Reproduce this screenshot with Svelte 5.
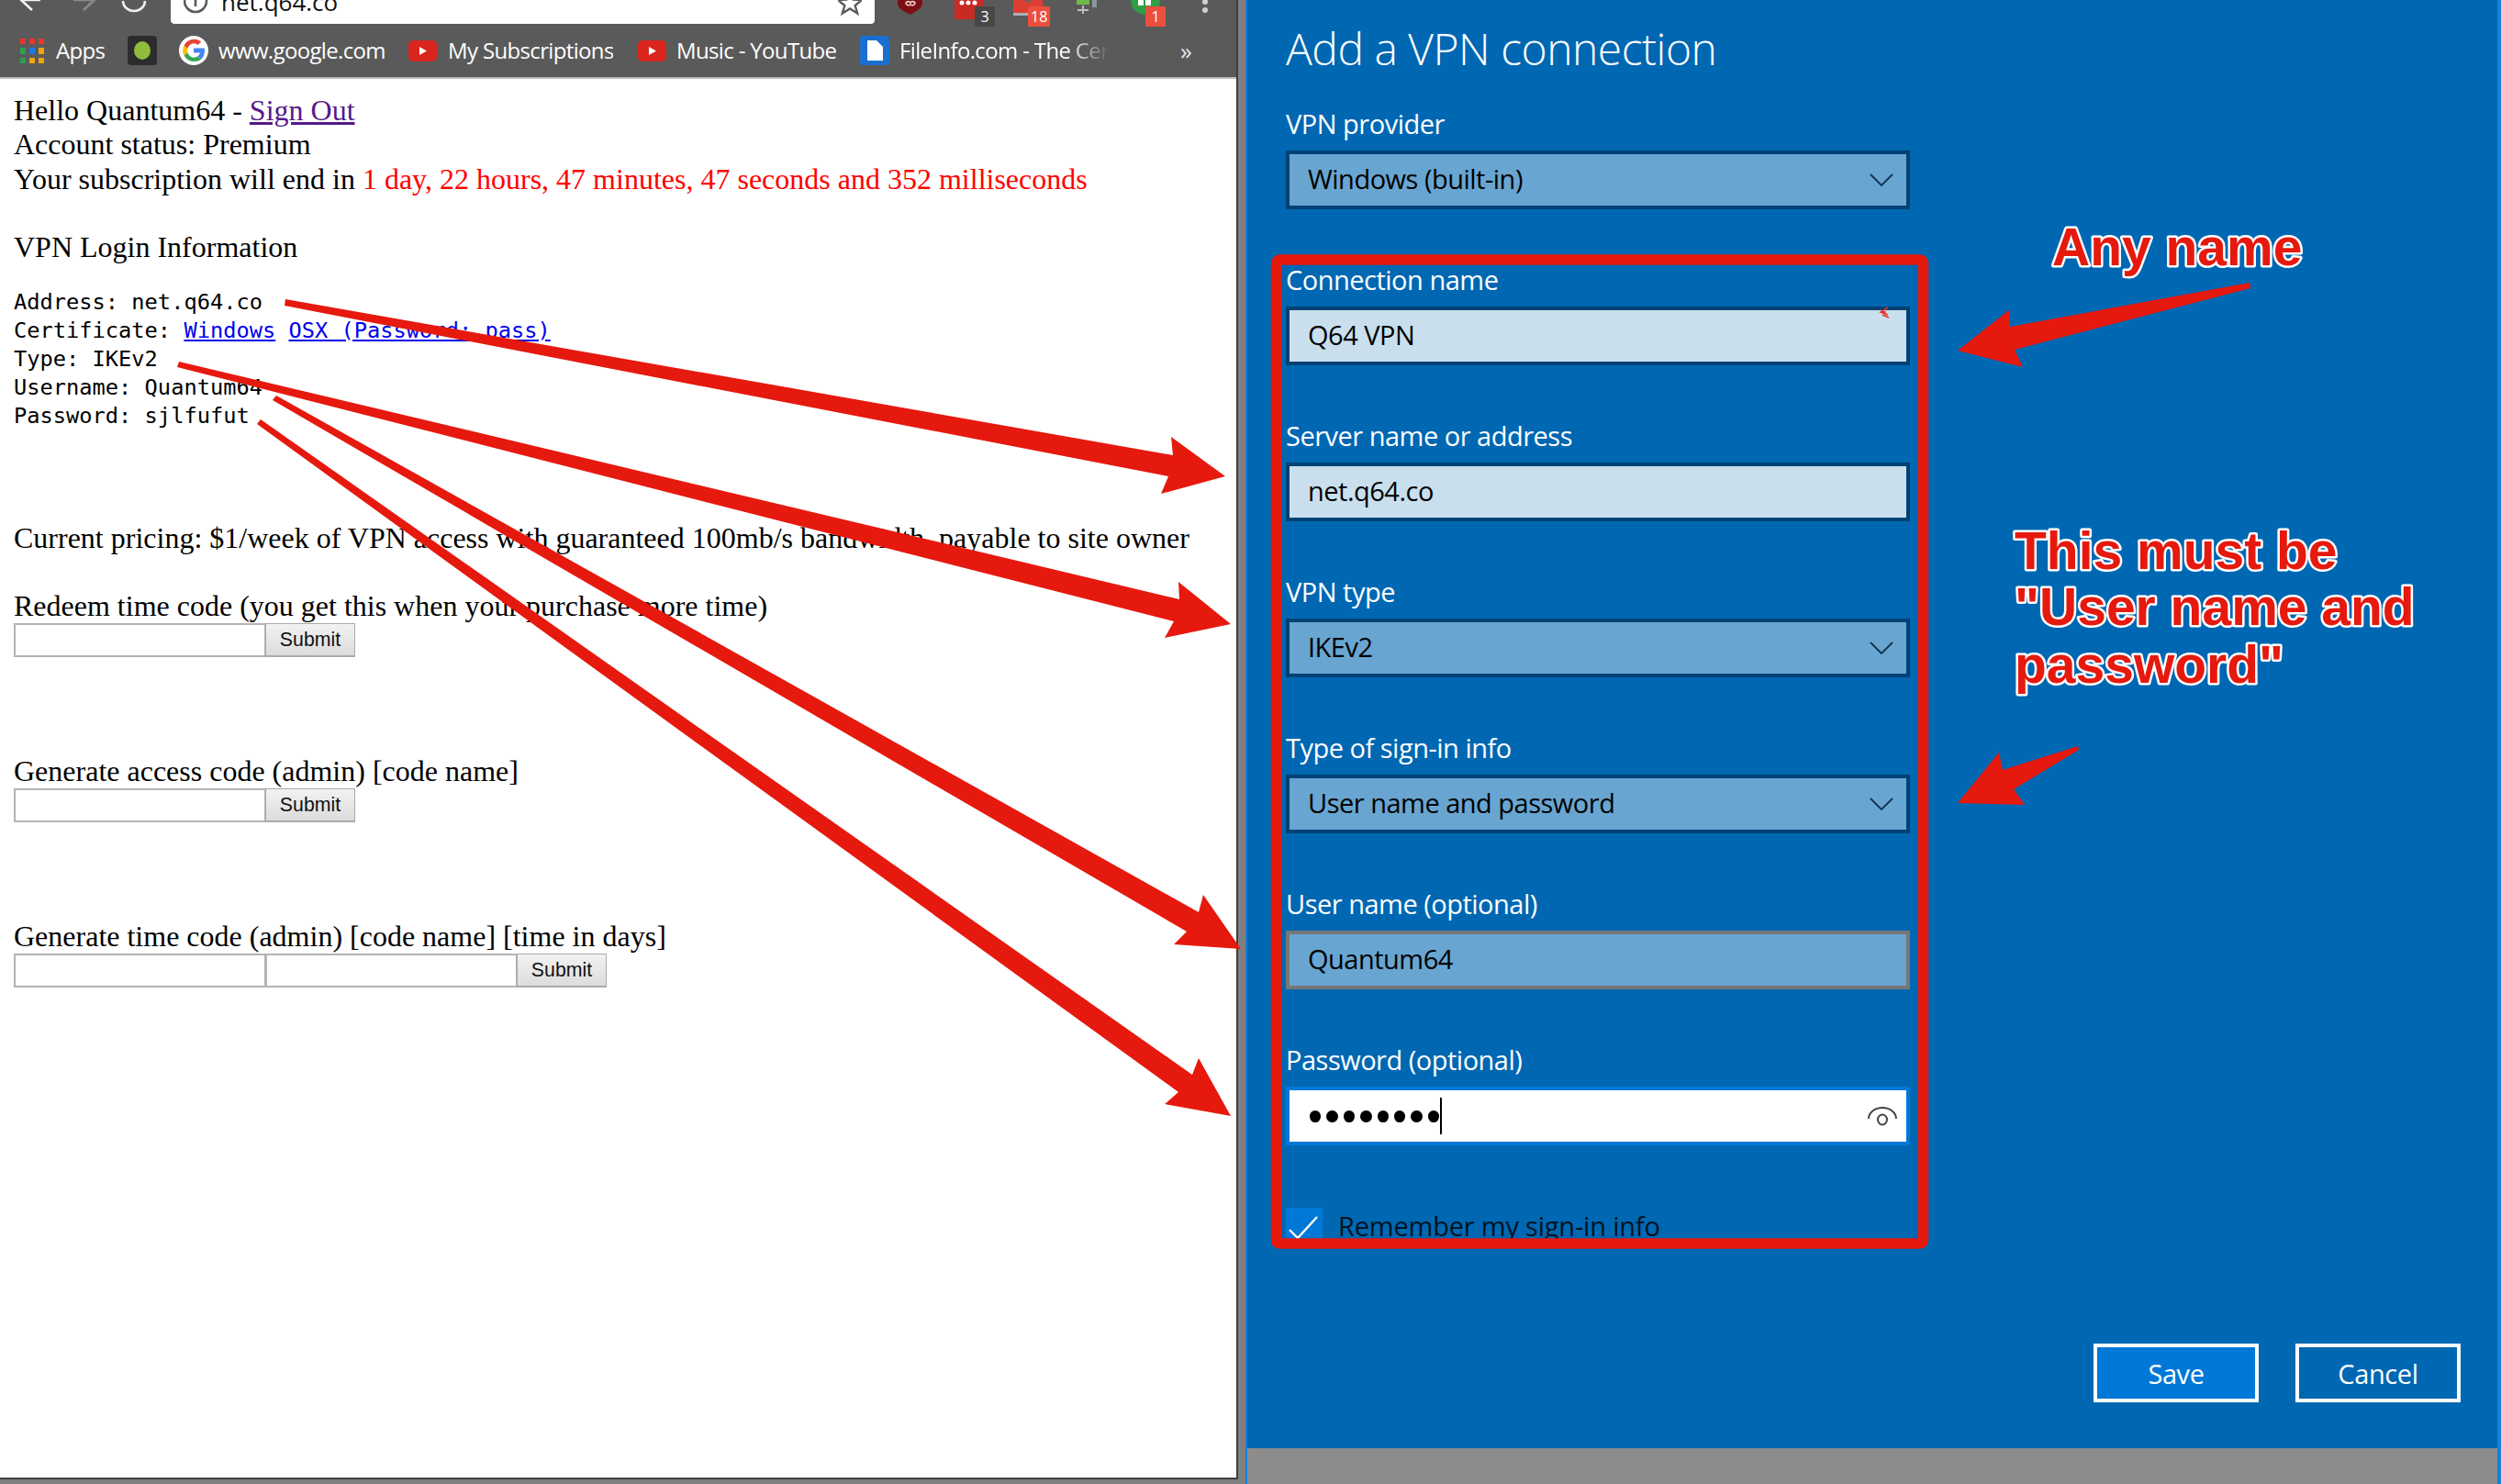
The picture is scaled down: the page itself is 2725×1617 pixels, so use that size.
<script>
  const bookmarks = [
    { icon: "apps", label: "Apps", width: 54, gap: 24, inner: 13 },
    { icon: "dot", label: "", width: 0, gap: 24, inner: 0 },
    { icon: "google", label: "www.google.com", width: 182, gap: 25, inner: 11 },
    { icon: "yt", label: "My Subscriptions", width: 180, gap: 27, inner: 12 },
    { icon: "yt", label: "Music - YouTube", width: 175, gap: 25, inner: 11 },
    { icon: "file", label: "FileInfo.com - The Cer", width: 229, gap: 0, inner: 11, fade: true },
  ];

  const fields = [
    { label: "VPN provider", value: "Windows (built-in)", kind: "select" },
    { label: "Connection name", value: "Q64 VPN", kind: "text" },
    { label: "Server name or address", value: "net.q64.co", kind: "text" },
    { label: "VPN type", value: "IKEv2", kind: "select" },
    { label: "Type of sign-in info", value: "User name and password", kind: "select" },
    { label: "User name (optional)", value: "Quantum64", kind: "hover" },
    { label: "Password (optional)", value: "", kind: "password" },
  ];

  const arrows = [
    "311,326 1278,496 1276,476 1335,519 1265,538 1273,519 310,333",
    "195,394 1285,653 1284,634 1341,680 1269,695 1279,677 193,400",
    "301,431 1306,994 1311,975 1352,1034 1279,1029 1293,1015 297,436",
    "284,457 1299,1171 1306,1153 1341,1216 1269,1203 1284,1190 280,462",
    "2451,308 2190,356 2190,337 2133,382 2204,400 2195,381 2452,314",
    "2264,813 2182,839 2178,820 2133,875 2206,877 2194,860 2265,817",
  ];
</script>

<div class="app">
  <div class="browser">
    <div class="toolbar">
      <svg class="nav" width="160" height="26" viewBox="0 0 160 26">
        <path d="M44 0H23M22 -1l13 12" fill="none" stroke="#f2f2f2" stroke-width="2.600" />
        <path d="M80 0h24M104 -1l-13 12" fill="none" stroke="#8a8a8a" stroke-width="2.600" />
        <path d="M158 1a12 11 0 1 1-24 0" fill="none" stroke="#eee" stroke-width="2.600" />
      </svg>
      <div class="urlbar">
        <svg width="28" height="26" viewBox="0 0 28 26">
          <circle cx="13" cy="1" r="12" fill="none" stroke="#5a5a5a" stroke-width="2.600" />
          <path d="M13 -2v9" stroke="#5a5a5a" stroke-width="2.600" />
        </svg>
        <span class="url">net.q64.co</span>
        <svg class="star" width="26" height="26" viewBox="0 0 26 26">
          <path d="M13 -10l3.600 9.500 9.400.5-7.300 6 2.500 8.500-8.200-5-8.200 5 2.500-8.500-7.300-6 9.400-.5z" fill="none" stroke="#5a5a5a" stroke-width="2.400" />
        </svg>
      </div>
      <div class="extensions">
        <svg width="28" height="16" viewBox="0 0 28 16"><path d="M0-6h27v10c0 5-8 9-13.500 12C8 13 0 9 0 4z" fill="#7b0f14" /><path d="M9 3a3 3 0 0 1 5 0 3 3 0 0 1 5 0 3 3 0 0 1-5 2 3 3 0 0 1-5-2" fill="none" stroke="#f3d0d0" stroke-width="1.600" /></svg>
        <div class="ext ext-meter">
          <svg width="32" height="21" viewBox="0 0 32 21"><rect y="-8" width="31" height="29" rx="2" fill="#c92a24" /><circle cx="8" cy="3" r="2.500" fill="#fff" /><circle cx="15" cy="3" r="2.500" fill="#fff" /><circle cx="22" cy="3" r="2.500" fill="#fff" /></svg>
          <span class="badge dark">3</span>
        </div>
        <div class="ext ext-mail">
          <svg width="32" height="18" viewBox="0 0 32 18"><rect y="-8" width="32" height="22" fill="#dc3f32" /><rect y="14" width="32" height="3" fill="#a9b0b5" /><path d="M10-2l6 6 6-6" fill="#666" /></svg>
          <span class="badge">18</span>
        </div>
        <svg class="ext-desk" width="26" height="16" viewBox="0 0 26 16"><rect x="2" y="-4" width="14" height="9" fill="#6dbb45" /><path d="M9 6v9M3 11h12" stroke="#b9c0c4" stroke-width="2" /><path d="M19-4h5v12h-5z" fill="#8d969b" /></svg>
        <div class="ext ext-hang">
          <svg width="32" height="17" viewBox="0 0 32 17"><circle cx="16" cy="0" r="16" fill="#2f9e44" /><rect x="8" y="-6" width="6" height="12" fill="#fff" /><rect x="16" y="-6" width="6" height="12" fill="#fff" /></svg>
          <span class="badge">1</span>
        </div>
        <svg class="menu" width="8" height="16" viewBox="0 0 8 16"><circle cx="4" cy="2" r="3" fill="#cfcfcf" /><circle cx="4" cy="11" r="3" fill="#cfcfcf" /></svg>
      </div>
    </div>

    <div class="bookmarks">
      {#each bookmarks as b}
        <div class="bookmark" style="margin-right: {b.gap}px; gap: {b.inner}px">
          {#if b.icon === "apps"}
            <svg width="26" height="27" viewBox="0 0 26 27">
              <path d="M0 0h6v6H0zM10 0h6v6h-6zM20 0h6v6h-6z" fill="#e8372f" />
              <path d="M0 10h6v7H0zM0 21h6v6H0z" fill="#2f9e54" />
              <path d="M10 10h6v7h-6z" fill="#1a78e8" />
              <path d="M20 10h6v7h-6zM10 21h6v6h-6zM20 21h6v6h-6z" fill="#f2a20c" />
            </svg>
          {:else if b.icon === "dot"}
            <svg width="32" height="32" viewBox="0 0 32 32">
              <rect width="32" height="32" rx="4" fill="#2c2c2c" />
              <ellipse cx="16" cy="16" rx="9" ry="10" fill="#8fbc3d" />
            </svg>
          {:else if b.icon === "google"}
            <svg width="32" height="32" viewBox="0 0 32 32">
              <circle cx="16" cy="16" r="16" fill="#fff" />
              <path d="M16 13.500v5h7a7.500 7.500 0 0 1-3 4l4 3.200c2.800-2.500 4-6 4-9.700 0-.9-.1-1.700-.2-2.500z" fill="#4285f4" />
              <path d="M9.500 18.200 5.500 21.300A12 12 0 0 0 16 28c3.300 0 6-1 8-2.300L20 22.500c-1 .8-2.400 1.200-4 1.200-3 0-5.500-2.200-6.500-5.500z" fill="#34a853" />
              <path d="M9.500 13.800 5.500 10.700a12 12 0 0 0 0 10.600l4-3.100a7.500 7.500 0 0 1 0-4.400z" fill="#fbbc05" />
              <path d="M16 8.300c1.900 0 3.500.7 4.700 1.800l3.500-3.500A12 12 0 0 0 5.500 10.700l4 3.100c1-3.300 3.500-5.500 6.500-5.500z" fill="#ea4335" />
            </svg>
          {:else if b.icon === "yt"}
            <svg width="31" height="23" viewBox="0 0 31 23">
              <rect width="31" height="23" rx="5" fill="#d9251d" />
              <path d="M12 7l8 4.500-8 4.500z" fill="#fff" />
            </svg>
          {:else}
            <svg width="32" height="32" viewBox="0 0 32 32">
              <rect width="32" height="32" rx="3" fill="#1a6fd0" />
              <path d="M8 5h10l7 7v15H8z" fill="#fff" />
            </svg>
          {/if}
          {#if b.label}
            <span class="bookmark-label" class:fade={b.fade} style="width: {b.width}px">{b.label}</span>
          {/if}
        </div>
      {/each}
      <span class="more">»</span>
    </div>

    <div class="page">
      <div class="intro">
        Hello Quantum64 - <a href="#signout" class="visited">Sign Out</a><br />
        Account status: Premium<br />
        Your subscription will end in <span class="timer">1 day, 22 hours, 47 minutes, 47 seconds and 352 milliseconds</span>
      </div>
      <div class="heading">VPN Login Information</div>
      <pre>Address: net.q64.co
Certificate: <a href="#win">Windows</a> <a href="#osx">OSX (Password: pass)</a>
Type: IKEv2
Username: Quantum64
Password: sjlfufut</pre>
      <div class="pricing">Current pricing: $1/week of VPN access with guaranteed 100mb/s bandwidth, payable to site owner</div>
      <div class="form first">
        <div>Redeem time code (you get this when your purchase more time)</div>
        <div class="row"><input type="text" /><button>Submit</button></div>
      </div>
      <div class="form">
        <div>Generate access code (admin) [code name]</div>
        <div class="row"><input type="text" /><button>Submit</button></div>
      </div>
      <div class="form">
        <div>Generate time code (admin) [code name] [time in days]</div>
        <div class="row"><input type="text" /><input type="text" /><button>Submit</button></div>
      </div>
    </div>
  </div>

  <div class="settings">
    <div class="panel">
      <h1>Add a VPN connection</h1>
      {#each fields as f}
        <div class="group">
          <div class="label">{f.label}</div>
          <div class="field {f.kind}">
            <span class="value">{f.value}</span>
            {#if f.kind === "select"}
              <svg class="chevron" width="26" height="14" viewBox="0 0 26 14"><path d="M1 1l12 12L25 1" fill="none" stroke="#12324c" stroke-width="1.800" /></svg>
            {:else if f.kind === "password"}
              <span class="dots">{#each Array(8) as _}<i></i>{/each}</span>
              <span class="caret"></span>
              <svg class="eye" width="32" height="22" viewBox="0 0 32 22">
                <path d="M1 14A15 12 0 0 1 31 14" fill="none" stroke="#444" stroke-width="2" />
                <ellipse cx="16" cy="15" rx="5" ry="5.500" fill="none" stroke="#444" stroke-width="2" />
              </svg>
            {/if}
          </div>
        </div>
      {/each}
      <div class="remember">
        <span class="check">
          <svg width="36" height="34" viewBox="0 0 36 34"><path d="M2 22l9 9L32 8" fill="none" stroke="#fff" stroke-width="2.400" /></svg>
        </span>
        <span>Remember my sign-in info</span>
      </div>
    </div>
    <div class="actions">
      <button class="primary">Save</button>
      <button>Cancel</button>
    </div>
    <div class="footer"></div>
  </div>

  <svg class="overlay" width="2725" height="1617" viewBox="0 0 2725 1617">
    <rect class="box" x="1390.500" y="283" width="705" height="1072" rx="4" />
    {#each arrows as points}
      <polygon class="arrow" {points} />
    {/each}
    <path class="mark" d="M2057 335l-8 5 8 3M2055 340h-6M2058 346l-7-3" />
    <text class="note" x="2236" y="289">Any name</text>
    <text class="note" x="2195" y="620">This must be</text>
    <text class="note" x="2195" y="681">"User name and</text>
    <text class="note" x="2195" y="744">password"</text>
  </svg>
</div>

<style>
  :global(body) {
    margin: 0;
    background: #808080;
  }

  .app {
    position: relative;
    display: flex;
    width: 2725px;
    height: 1617px;
    overflow: hidden;
    background: #808080;
  }

  .browser {
    box-sizing: border-box;
    display: flex;
    flex-direction: column;
    width: 1349px;
    height: 1612px;
    margin-right: 8px;
    border-right: 2px solid #3e3e3e;
    border-bottom: 2px solid #3e3e3e;
    background: #fff;
  }

  .toolbar {
    display: flex;
    flex: none;
    height: 26px;
    background: #5a5a5a;
  }

  .nav {
    flex: none;
    margin-right: 26px;
  }

  .urlbar {
    display: flex;
    flex: none;
    box-sizing: border-box;
    width: 767px;
    height: 26px;
    padding-left: 14px;
    overflow: hidden;
    background: #fff;
    border-radius: 0 0 4px 4px;
    box-shadow: 0 1px 0 #2e2e2e;
  }

  .url {
    margin: -14px 0 0 13px;
    font: 26px/32px "Open Sans", sans-serif;
    color: #111;
  }

  .star {
    margin-left: auto;
    margin-right: 14px;
  }

  .extensions {
    display: flex;
    flex: none;
    align-items: flex-start;
    padding-left: 25px;
  }

  .ext {
    position: relative;
    height: 16px;
  }

  .ext-meter { margin-left: 34px; }
  .ext-mail { margin-left: 32px; }
  .ext-desk { margin-left: 35px; }
  .ext-hang { margin-left: 35px; }
  .menu { margin-left: 45px; }

  .badge {
    position: absolute;
    top: 7px;
    left: 16px;
    min-width: 22px;
    height: 22px;
    padding: 0 3px;
    box-sizing: border-box;
    background: #ea4f3d;
    color: #fff;
    border-radius: 1px;
    font: 16px/22px "Open Sans", sans-serif;
    text-align: center;
  }

  .badge.dark {
    left: 22px;
    background: #474747;
  }

  .bookmarks {
    display: flex;
    flex: none;
    align-items: center;
    height: 58px;
    padding-left: 22px;
    background: #5a5a5a;
    border-bottom: 2px solid #bdbdbd;
  }

  .bookmark {
    display: flex;
    align-items: center;
    flex: none;
  }

  .bookmark-label {
    display: block;
    overflow: hidden;
    white-space: nowrap;
    color: #fff;
    font: 24px/32px "Open Sans", sans-serif;
    letter-spacing: -0.65px;
  }

  .bookmark-label.fade {
    -webkit-mask-image: linear-gradient(to right, #000 80%, transparent);
    mask-image: linear-gradient(to right, #000 80%, transparent);
  }

  .more {
    margin-left: 77px;
    color: #e6e6e6;
    font: 26px/30px "Open Sans", sans-serif;
  }

  .page {
    flex: 1;
    padding: 16px 0 0 15px;
    font: 32px/37.4px "Liberation Serif", serif;
    color: #000;
  }

  .page a {
    color: #0000ee;
  }

  .page a.visited {
    color: #551a8b;
  }

  .timer {
    color: #ff0000;
  }

  .heading {
    margin-top: 37px;
  }

  pre {
    margin: 25px 0 0;
    font: 23.700px/31px "DejaVu Sans Mono", monospace;
  }

  .pricing {
    margin-top: 99px;
  }

  .form {
    height: 180px;
  }

  .form.first {
    margin-top: 37px;
  }

  .row {
    display: flex;
    height: 37px;
  }

  input {
    box-sizing: border-box;
    width: 274px;
    height: 37px;
    margin: 0;
    border: 2px solid #b4b4b4;
    border-right-width: 1px;
    background: #fff;
  }

  .row button {
    box-sizing: border-box;
    width: 98px;
    height: 37px;
    padding: 0;
    border: 1px solid #aaa;
    border-bottom-width: 2px;
    background: linear-gradient(#f2f2f2, #dcdcdc);
    color: #111;
    font: 21.300px "Liberation Sans", sans-serif;
  }

  .settings {
    display: flex;
    flex: 1;
    flex-direction: column;
    border-left: 2px solid #1a7fd6;
    border-right: 4px solid #1a7fd6;
    background: #0067b2;
    font-family: "Open Sans", sans-serif;
    color: #fff;
  }

  .panel {
    flex: 1;
    padding-left: 42px;
  }

  h1 {
    height: 124px;
    margin: 0;
    font: 300 48px/62px "Open Sans", sans-serif;
    letter-spacing: -0.5px;
    box-sizing: border-box;
    padding-top: 22px;
  }

  .group {
    width: 680px;
    height: 170px;
  }

  .label {
    height: 40px;
    font-size: 29px;
    line-height: 22px;
    letter-spacing: -0.5px;
  }

  .field {
    display: flex;
    align-items: center;
    box-sizing: border-box;
    height: 64px;
    padding: 0 20px;
    border: 4px solid #004274;
    color: #000;
    font-size: 29px;
    letter-spacing: -0.5px;
  }

  .value {
    margin-bottom: 4px;
  }

  .select {
    justify-content: space-between;
    background: #68a5d1;
  }

  .text {
    background: #c9dfee;
  }

  .hover {
    background: #68a5d1;
    border-color: #767676;
  }

  .password {
    background: #fff;
    border-color: #0078d7;
    padding-left: 22px;
  }

  .chevron {
    margin-right: -6px;
  }

  .dots {
    display: flex;
    gap: 6px;
  }

  .dots i {
    display: block;
    width: 12.400px;
    height: 13px;
    border-radius: 50%;
    background: #000;
  }

  .caret {
    width: 2px;
    height: 40px;
    margin-left: 1px;
    background: #000;
  }

  .eye {
    margin-left: auto;
    margin-right: -10px;
  }

  .remember {
    display: flex;
    align-items: flex-start;
    gap: 17px;
    height: 40px;
    margin-top: 2px;
    color: #00131f;
    font-size: 29px;
    line-height: 40px;
    letter-spacing: -0.2px;
  }

  .check {
    display: block;
    width: 40px;
    height: 40px;
    background: #0078d7;
  }

  .check svg {
    display: block;
    margin: 2px;
  }

  .actions {
    display: flex;
    justify-content: flex-end;
    gap: 40px;
    padding: 0 40px 50px 0;
  }

  .actions button {
    box-sizing: border-box;
    width: 180px;
    height: 64px;
    border: 4px solid #fff;
    background: transparent;
    color: #fff;
    font: 29px "Open Sans", sans-serif;
    letter-spacing: -0.4px;
  }

  .actions button.primary {
    background: #0078d7;
  }

  .footer {
    flex: none;
    height: 39px;
    background: #8c8c8c;
  }

  .overlay {
    position: absolute;
    top: 0;
    left: 0;
    pointer-events: none;
  }

  .box {
    fill: none;
    stroke: #e6190e;
    stroke-width: 11.500px;
    stroke-linejoin: round;
  }

  .arrow {
    fill: #e6190e;
  }

  .mark {
    fill: none;
    stroke: #ee2a22;
    stroke-width: 1.500px;
  }

  .note {
    font: bold 57px "Liberation Sans", sans-serif;
    fill: #e6190e;
    stroke: #fff;
    stroke-width: 5px;
    stroke-linejoin: round;
    paint-order: stroke fill;
  }
</style>
